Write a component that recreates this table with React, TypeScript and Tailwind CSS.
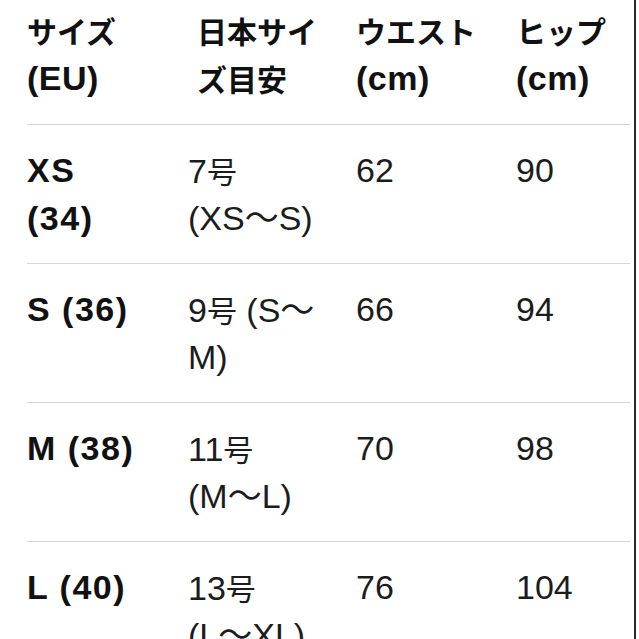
const font = {
  fontFamily: '"Liberation Sans", "Noto Sans CJK JP", sans-serif',
};

type Row = { size: string[]; jp: string[]; waist: string; hip: string };

const rows: Row[] = [
  { size: ["XS", "(34)"], jp: ["7号", "(XS〜S)"], waist: "62", hip: "90" },
  { size: ["S (36)"], jp: ["9号 (S〜", "M)"], waist: "66", hip: "94" },
  { size: ["M (38)"], jp: ["11号", "(M〜L)"], waist: "70", hip: "98" },
  { size: ["L (40)"], jp: ["13号", "(L〜XL)"], waist: "76", hip: "104" },
];

const cjk = /[\u3040-\u30ff\u4e00-\u9fff]/;

// kana/kanji are a little smaller than the latin glyphs in the shot
function Mixed({ text }: { text: string }) {
  const parts = text.split(/([\u3040-\u30ff\u4e00-\u9fff]+)/).filter(Boolean);
  return (
    <>
      {parts.map((p, i) =>
        cjk.test(p) ? (
          <span
            key={i}
            className="text-[30px] tracking-normal"
            style={{ fontFamily: '"Noto Sans CJK JP", sans-serif' }}
          >
            {p}
          </span>
        ) : (
          <span key={i}>{p}</span>
        )
      )}
    </>
  );
}

function Lines({ items }: { items: string[] }) {
  return (
    <>
      {items.map((t) => (
        <div key={t} className="h-[48px] overflow-visible whitespace-nowrap">
          <Mixed text={t} />
        </div>
      ))}
    </>
  );
}

export default function App() {
  return (
    <div
      className="flex h-[639px] w-[639px] overflow-hidden bg-white text-[34px] leading-[48px]"
      style={font}
    >
      <div className="w-[634px] shrink-0 pl-[27px] pr-[4px]">
        {/* header */}
        <div className="grid grid-cols-[161px_168px_160px_114px] pt-[6px] pb-[22px] font-bold tracking-[0.5px] text-[#111]">
          <div>
            <Lines items={["サイズ", "(EU)"]} />
          </div>
          <div className="pl-[9px]">
            <Lines items={["日本サイ", "ズ目安"]} />
          </div>
          <div>
            <Lines items={["ウエスト", "(cm)"]} />
          </div>
          <div>
            <Lines items={["ヒップ", "(cm)"]} />
          </div>
        </div>

        {rows.map((r) => (
          <div
            key={r.waist}
            className="grid grid-cols-[161px_168px_160px_114px] border-t border-[#d6d6d6] pt-[21px] pb-[21px] text-[#1c1c1c]"
          >
            <div className="font-bold tracking-[1.5px] text-[#111]">
              <Lines items={r.size} />
            </div>
            <div>
              <Lines items={r.jp} />
            </div>
            <div className="h-[48px]">{r.waist}</div>
            <div className="h-[48px]">{r.hip}</div>
          </div>
        ))}
      </div>
      <div className="w-[2px] shrink-0 bg-[#2b2b2b]" />
    </div>
  );
}
